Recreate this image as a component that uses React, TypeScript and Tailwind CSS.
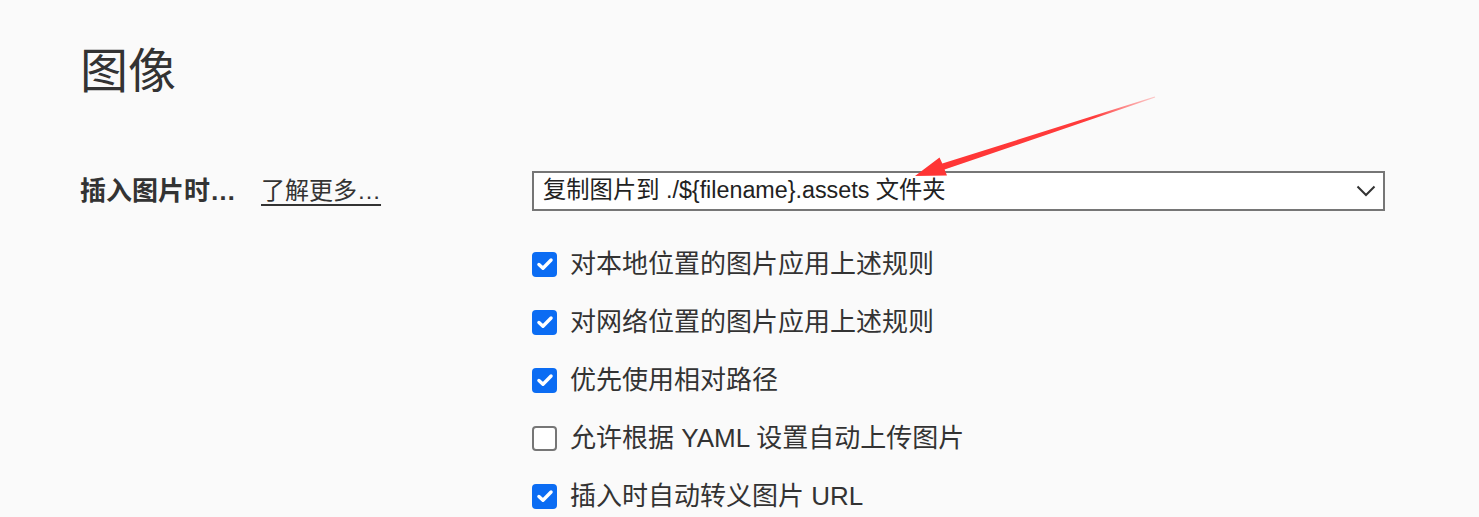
import React from 'react';

const FONT = { fontFamily: '"Liberation Sans", "Noto Sans CJK SC", sans-serif' };

type Item = { label: string; checked: boolean };

const items: Item[] = [
  { label: '对本地位置的图片应用上述规则', checked: true },
  { label: '对网络位置的图片应用上述规则', checked: true },
  { label: '优先使用相对路径', checked: true },
  { label: '允许根据 YAML 设置自动上传图片', checked: false },
  { label: '插入时自动转义图片 URL', checked: true },
];

function CheckBox({ checked }: { checked: boolean }) {
  if (!checked) {
    return <span className="w-[25px] h-[25px] shrink-0 rounded-[4px] border-2 border-[#767676] bg-white" />;
  }
  return (
    <span className="w-[25px] h-[25px] shrink-0 rounded-[4px] bg-[#0b6cf3] flex items-center justify-center">
      <svg className="w-[18px] h-[18px]" viewBox="0 0 16 16" fill="none">
        <path d="M2.6 8.4l3.6 3.4L13.4 4.4" stroke="#fff" strokeWidth="3" strokeLinecap="round" strokeLinejoin="round" />
      </svg>
    </span>
  );
}

export default function App() {
  return (
    <div className="relative min-h-[517px] w-full bg-[#fafafa] text-[#333] overflow-hidden" style={FONT}>
      <div className="pl-[80px] pr-[94px] pt-[44px]">
        <h1 className="text-[48px] leading-[56px] font-normal">图像</h1>

        <div className="mt-[71px] grid grid-cols-[452px_1fr] items-center">
          <div className="flex items-center">
            <span className="text-[26px] font-bold leading-[32px]">插入图片时…</span>
            <a className="ml-[25px] text-[24px] leading-[32px] underline underline-offset-[5px] decoration-[1.5px]">了解更多…</a>
          </div>
          <div className="h-[40px] border-2 border-[#767676] bg-white flex items-center justify-between pl-[9px] pr-[7px]">
            <span className="text-[23.3px] leading-none text-[#222]">复制图片到 ./${'{'}filename{'}'}.assets 文件夹</span>
            <svg className="w-[20px] h-[12px]" viewBox="0 0 20 12" fill="none">
              <path d="M1.5 1.5l8.5 8.5 8.5-8.5" stroke="#333" strokeWidth="2" />
            </svg>
          </div>
        </div>

        <div className="ml-[452px] mt-[36px] flex flex-col gap-[24px]">
          {items.map((it) => (
            <label key={it.label} className="flex items-center gap-[13px] h-[34px]">
              <CheckBox checked={it.checked} />
              <span className="text-[26px] leading-none">{it.label}</span>
            </label>
          ))}
        </div>
      </div>

      {/* annotation arrow */}
      <svg className="absolute inset-0 pointer-events-none" width="1479" height="517" viewBox="0 0 1479 517">
        <defs>
          <linearGradient id="arr" x1="915" y1="176" x2="1155" y2="97" gradientUnits="userSpaceOnUse">
            <stop offset="0" stopColor="#ff3434" />
            <stop offset="0.75" stopColor="#ff3c3c" />
            <stop offset="1" stopColor="#ff6b6b" stopOpacity="0.35" />
          </linearGradient>
        </defs>
        <polygon
          points="915,176 939.5,157.5 942.3,163.6 1154.8,96.4 1155.2,97.6 944.6,169.6 947,175.6"
          fill="url(#arr)"
        />
      </svg>
    </div>
  );
}
